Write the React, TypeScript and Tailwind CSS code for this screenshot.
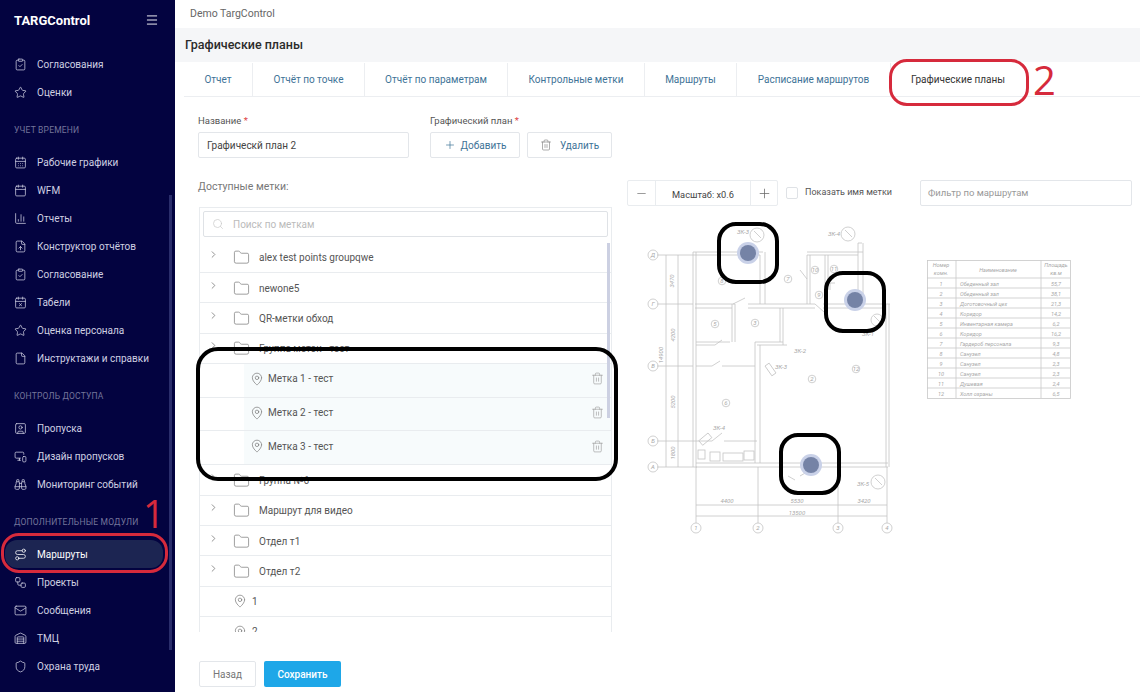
import React from 'react';
import {
  Binoculars, Calendar, CalendarDays, CalendarX, ChartColumn, ChevronRight, ClipboardCheck, File, FileUp,
  Folder, Mail, MapPin, Menu, Minus, MonitorSmartphone, Plus, Route, Search, Shield, SquareUser, Star,
  Trash2, Warehouse, Workflow,
} from 'lucide-react';

const navSections = [
  { title: '', items: [['Согласования', ClipboardCheck], ['Оценки', Star]] },
  {
    title: 'УЧЕТ ВРЕМЕНИ',
    items: [
      ['Рабочие графики', CalendarDays], ['WFM', Calendar], ['Отчеты', ChartColumn], ['Конструктор отчётов', FileUp],
      ['Согласование', ClipboardCheck], ['Табели', CalendarX], ['Оценка персонала', Star], ['Инструктажи и справки', File],
    ],
  },
  { title: 'КОНТРОЛЬ ДОСТУПА', items: [['Пропуска', SquareUser], ['Дизайн пропусков', MonitorSmartphone], ['Мониторинг событий', Binoculars]] },
  { title: 'ДОПОЛНИТЕЛЬНЫЕ МОДУЛИ', items: [['Маршруты', Route], ['Проекты', Workflow], ['Сообщения', Mail], ['ТМЦ', Warehouse], ['Охрана труда', Shield]] },
] as { title: string; items: [string, any][] }[];

const tabs = [
  ['Отчет', 'w-[69px]'], ['Отчёт по точке', 'w-[112px]'], ['Отчёт по параметрам', 'w-[143px]'], ['Контрольные метки', 'w-[137px]'],
  ['Маршруты', 'w-[92px]'], ['Расписание маршрутов', 'w-[154px]'],
];

// plan lines in page coordinates
const planLines = [
  [666, 255, 666, 467], [678, 255, 678, 467], [657, 255, 693, 255], [657, 304, 693, 304], [657, 366, 693, 366], [657, 441, 697, 441], [657, 467, 697, 467],
  [693, 252, 693, 467], [696, 252, 696, 467], [693, 252, 763, 252], [693, 255, 760, 255], [807, 252, 863, 252], [807, 255, 858, 255],
  [760, 255, 760, 304], [765, 252, 765, 304], [807, 255, 807, 304], [810, 255, 810, 304], [825, 255, 825, 290], [828, 255, 828, 290],
  [858, 243, 858, 300], [863, 243, 863, 304], [695, 304, 735, 304], [695, 308, 732, 308], [748, 304, 815, 304], [748, 308, 815, 308], [823, 304, 890, 304], [823, 308, 884, 308],
  [886, 304, 886, 467], [889, 304, 889, 467], [732, 304, 732, 342], [735, 304, 735, 342], [780, 308, 780, 342], [783, 308, 783, 345], [755, 342, 783, 342], [757, 345, 787, 345],
  [755, 342, 755, 463], [760, 345, 760, 463], [696, 342, 730, 342], [696, 345, 715, 345], [696, 366, 712, 366], [722, 366, 755, 366], [697, 441, 712, 441], [724, 441, 757, 441],
  [696, 463, 888, 463], [696, 467, 888, 467], [696, 505, 887, 505], [696, 516, 887, 516], [696, 467, 696, 523], [758, 467, 758, 523], [838, 467, 838, 523], [887, 467, 887, 523],
  [715, 345, 722, 340], [712, 366, 720, 361], [712, 441, 722, 433], [800, 270, 807, 279], [733, 304, 745, 298], [815, 304, 824, 312], [788, 476, 795, 480], [800, 476, 807, 472],
  [825, 283, 835, 283], [830, 283, 830, 290], [858, 243, 862, 243],
];

const axisCircles = [
  [653, 255, 'Д'], [653, 304, 'Г'], [653, 366, 'В'], [653, 441, 'Б'], [653, 467, 'А'], [696, 528, '1'], [758, 528, '2'], [838, 528, '3'], [887, 528, '4'],
] as [number, number, string][];

const roomCircles = [
  [815, 270, '10'], [834, 269, '11'], [722, 281, '8'], [788, 279, '7'], [819, 295, '9'], [715, 324, '5'], [755, 323, '3'], [856, 369, '12'], [812, 379, '2'], [726, 403, '6'],
] as [number, number, string][];

const fixtureCircles = [[757, 235, 7], [848, 234, 7], [877, 320, 6], [878, 482, 7]];

const tableRows = [
  ['1', 'Обеденный зал', '55,7'], ['2', 'Обеденный зал', '38,1'], ['3', 'Доготовочный цех', '21,3'], ['4', 'Коридор', '14,2'], ['5', 'Инвентарная камера', '6,2'], ['6', 'Коридор', '16,2'],
  ['7', 'Гардероб персонала', '9,3'], ['8', 'Санузел', '4,8'], ['9', 'Санузел', '2,3'], ['10', 'Санузел', '2,3'], ['11', 'Душевая', '2,4'], ['12', 'Холл охраны', '6,5'],
];

const Plan = () => (
  <svg className="block w-[505px] h-[335px]" viewBox="627 210 505 335" fill="none">
    <g stroke="#c4c4c4" strokeWidth="0.8">
      {planLines.map((l, i) => <line key={i} x1={l[0]} y1={l[1]} x2={l[2]} y2={l[3]} />)}
      {axisCircles.map((c, i) => <circle key={i} cx={c[0]} cy={c[1]} r="5" />)}
      {roomCircles.map((c, i) => <circle key={i} cx={c[0]} cy={c[1]} r="3.8" />)}
      {fixtureCircles.map((c, i) => (
        <g key={i}>
          <circle cx={c[0]} cy={c[1]} r={c[2]} />
          <line x1={c[0] - 3} y1={c[1] - 4} x2={c[0] + 4} y2={c[1] + 3} />
        </g>
      ))}
      <rect x="698" y="450" width="7" height="9" />
      <rect x="710" y="452" width="10" height="9" />
      <rect x="723" y="453" width="20" height="8" />
      <rect x="744" y="451" width="10" height="9" />
      <rect x="765" y="366" width="5" height="12" transform="rotate(-35 765 366)" />
      <rect x="708" y="433" width="6" height="12" transform="rotate(50 708 433)" />
    </g>
    <g fill="#a8a8a8" fontFamily="Roboto, sans-serif" fontSize="6" fontStyle="italic" textAnchor="middle">
      {[...axisCircles, ...roomCircles].map((c, i) => <text key={i} x={c[0]} y={c[1] + 2}>{c[2]}</text>)}
      <text x="727" y="503">4400</text>
      <text x="797" y="503">5530</text>
      <text x="864" y="503">3420</text>
      <text x="797" y="515">13500</text>
      <text x="743" y="234">ЗК-3</text>
      <text x="834" y="236">ЗК-4</text>
      <text x="868" y="336">ЗК-1</text>
      <text x="800" y="353">ЗК-2</text>
      <text x="781" y="369">ЗК-3</text>
      <text x="863" y="486">ЗК-5</text>
      <text x="719" y="430">ЗК-4</text>
      <text transform="rotate(-90 674 281)" x="674" y="281">3470</text>
      <text transform="rotate(-90 675 335)" x="675" y="335">4200</text>
      <text transform="rotate(-90 663 355)" x="663" y="355">14900</text>
      <text transform="rotate(-90 675 402)" x="675" y="402">5200</text>
      <text transform="rotate(-90 675 453)" x="675" y="453">1800</text>
    </g>
    {/* room schedule */}
    <g stroke="#c8c8c8" strokeWidth="0.8">
      <rect x="927.5" y="260.5" width="143" height="138" />
      <line x1="956" y1="260" x2="956" y2="398" />
      <line x1="1041" y1="260" x2="1041" y2="398" />
      {tableRows.map((_, i) => <line key={i} x1="927" y1={278 + i * 10} x2="1070" y2={278 + i * 10} />)}
    </g>
    <g fill="#a8a8a8" fontFamily="Roboto, sans-serif" fontSize="5.5" fontStyle="italic">
      <text x="941" y="267" textAnchor="middle">Номер</text>
      <text x="941" y="275" textAnchor="middle">комн.</text>
      <text x="998" y="272" textAnchor="middle">Наименование</text>
      <text x="1056" y="267" textAnchor="middle">Площадь</text>
      <text x="1056" y="275" textAnchor="middle">кв.м</text>
      {tableRows.map((r, i) => (
        <React.Fragment key={i}>
          <text x="941" y={285.5 + i * 10} textAnchor="middle">{r[0]}</text>
          <text x="960" y={285.5 + i * 10}>{r[1]}</text>
          <text x="1056" y={285.5 + i * 10} textAnchor="middle">{r[2]}</text>
        </React.Fragment>
      ))}
    </g>
    {/* points */}
    {[[748, 253], [855, 300], [811, 465]].map((p, i) => (
      <g key={i}>
        <circle cx={p[0]} cy={p[1]} r="11" fill="#c9d1e8" />
        <circle cx={p[0]} cy={p[1]} r="8" fill="#7583a6" />
      </g>
    ))}
    {/* annotations */}
    <g stroke="#000" strokeWidth="4">
      <rect x="719" y="224" width="58" height="58" rx="17" />
      <rect x="826" y="273" width="58" height="58" rx="17" />
      <rect x="781" y="435" width="58" height="58" rx="17" />
    </g>
  </svg>
);

const FolderRow = ({ name }: { name: string }) => (
  <div className="h-[30.4px] shrink-0 flex items-center pt-[1px] border-b border-[#e9ecef] text-[10px] text-[#555]">
    <ChevronRight className="w-[11px] h-[11px] ml-[8px] text-[#888] -translate-y-[3px]" />
    <Folder className="w-[17px] h-[17px] ml-[14px] text-[#777]" strokeWidth={1} />
    <span className="ml-[9px]">{name}</span>
  </div>
);

const LeafRow = ({ name }: { name: string }) => (
  <div className="h-[33.7px] shrink-0 flex items-center pl-[44px] border-b border-[#e9ecef]">
    <div className="flex-1 h-full flex items-center pb-[3px] bg-[#f7fbfc] text-[10px] text-[#555] pr-[7px]">
      <MapPin className="w-[14px] h-[14px] ml-[6px] text-[#777]" strokeWidth={1.2} />
      <span className="ml-[4px] flex-1">{name}</span>
      <Trash2 className="w-[13px] h-[13px] text-[#9a9a9a]" strokeWidth={1.2} />
    </div>
  </div>
);

const App: React.FC = () => {
  return (
    <div className="relative flex w-[1140px] h-[692px] overflow-hidden bg-white font-['Roboto',sans-serif]">
      {/* Sidebar */}
      <aside className="relative w-[175px] shrink-0 bg-[#030340] pl-[5px] pr-[12px]">
        <div className="h-[50px] flex justify-between pl-[9px] pr-[4px] pt-[12px] text-white">
          <span className="text-[13px] font-bold leading-[17px]">TARGControl</span>
          <Menu className="w-[14px] h-[14px] mt-[1px]" strokeWidth={1.6} />
        </div>
        {navSections.map(section => (
          <div key={section.title}>
            {section.title && (
              <div className="h-[42px] pt-[17px] pl-[9px] text-[8.5px] leading-[14px] text-[#74759b] tracking-[0.2px]">{section.title}</div>
            )}
            {section.items.map(([label, Icon]) => (
              <div key={label} className={`h-[28px] flex items-center rounded-[12px] pl-[9px] text-[10px] ${label === 'Маршруты' ? 'bg-[#1c2552] text-white' : 'text-[#cfd0e2]'}`}>
                <Icon className="w-[13px] h-[13px] shrink-0" strokeWidth={1.4} />
                <span className="ml-[10px]">{label}</span>
              </div>
            ))}
          </div>
        ))}
        <div className="absolute left-[169px] top-[195px] w-[3px] h-[455px] bg-[#2a2d6b]" />
      </aside>

      {/* Main */}
      <main className="flex-1 min-w-0 flex flex-col">
        <div className="h-[28px] pl-[15px] flex items-center text-[10.5px] text-[#666]">Demo TargControl</div>
        <div className="h-[34px] pl-[10px] flex items-center bg-[#f5f6f8] text-[12.5px] font-medium text-[#2b2b2b]">Графические планы</div>
        <div className="h-[35px] ml-[9px] pt-[1px] flex border-b border-[#eceef1] text-[10px] text-[#3e7397]">
          {tabs.map(([label, width]) => (
            <div key={label} className={`${width} flex items-center justify-center border-r border-[#eceef1]`}>{label}</div>
          ))}
          <div className="w-[134px] flex items-center justify-center text-[#333]">Графические планы</div>
        </div>

        <div className="flex pl-[23px] pt-[16px]">
          {/* Left column */}
          <div className="w-[414px] shrink-0">
            <div className="flex pt-[1px]">
              <div className="w-[232px]">
                <div className="text-[9.5px] leading-[14px] text-[#555]">Название <span className="text-[#d44]">*</span></div>
                <div className="mt-[4px] w-[211px] h-[26px] flex items-center pl-[8px] border border-[#e3e6ea] rounded-[2px] text-[10px] text-[#444]">Графическй план 2</div>
              </div>
              <div>
                <div className="text-[9.5px] leading-[14px] text-[#555]">Графический план <span className="text-[#d44]">*</span></div>
                <div className="mt-[4px] flex gap-[7px] text-[10px] text-[#3e7397]">
                  <div className="w-[90px] h-[26px] flex items-center justify-center gap-[5px] border border-[#e3e6ea] rounded-[2px]">
                    <Plus className="w-[12px] h-[12px]" strokeWidth={1.4} />Добавить
                  </div>
                  <div className="w-[85px] h-[26px] flex items-center justify-center gap-[8px] border border-[#e3e6ea] rounded-[2px]">
                    <Trash2 className="w-[12px] h-[12px] text-[#777]" strokeWidth={1.2} />Удалить
                  </div>
                </div>
              </div>
            </div>
            <div className="mt-[21px] text-[10.5px] leading-[16px] text-[#777]">Доступные метки:</div>
            <div className="relative mt-[12px] ml-[1px] w-[413px] h-[425px] flex flex-col overflow-hidden border border-b-0 border-[#e9ecef]">
              <div className="shrink-0 h-[34.5px] px-[3px] pt-[3px]">
                <div className="h-[26px] flex items-center pl-[8px] border border-[#dfe2e6] rounded-[2px] text-[10px] text-[#bbb]">
                  <Search className="w-[12px] h-[12px] text-[#ccc]" strokeWidth={1.5} />
                  <span className="ml-[9px]">Поиск по меткам</span>
                </div>
              </div>
              <FolderRow name="alex test points groupqwe" />
              <FolderRow name="newone5" />
              <FolderRow name="QR-метки обход" />
              <FolderRow name="Группа меток - тест" />
              <LeafRow name="Метка 1 - тест" />
              <LeafRow name="Метка 2 - тест" />
              <LeafRow name="Метка 3 - тест" />
              <FolderRow name="Группа №6" />
              <FolderRow name="Маршрут для видео" />
              <FolderRow name="Отдел т1" />
              <FolderRow name="Отдел т2" />
              {['1', '2'].map(n => (
                <div key={n} className="h-[30.4px] shrink-0 flex items-center border-b border-[#e9ecef] pl-[33px] text-[10px] text-[#555]">
                  <MapPin className="w-[14px] h-[14px] text-[#777]" strokeWidth={1.2} />
                  <span className="ml-[5px]">{n}</span>
                </div>
              ))}
              <div className="absolute right-[1px] top-[35px] w-[3px] h-[175px] bg-[#ccd0e2]" />
            </div>
            <div className="mt-[29px] ml-[1px] flex gap-[8px] text-[10px]">
              <div className="w-[57px] h-[26px] flex items-center justify-center border border-[#e3e6ea] rounded-[2px] text-[#777]">Назад</div>
              <div className="w-[77px] h-[26px] flex items-center justify-center bg-[#1ea7e8] rounded-[2px] text-white font-medium">Сохранить</div>
            </div>
          </div>

          {/* Plan column */}
          <div className="ml-[15px] pt-[67px] w-[505px]">
            <div className="flex h-[26px] items-center">
              <div className="w-[151px] h-[26px] flex items-center border border-[#e9ecef] rounded-[2px] text-[9.25px] text-[#444]">
                <div className="w-[28px] h-full flex items-center justify-center border-r border-[#e9ecef]"><Minus className="w-[13px] h-[13px] text-[#666]" strokeWidth={1.2} /></div>
                <div className="flex-1 text-center pt-[4px]">Масштаб: x0.6</div>
                <div className="w-[27px] h-full flex items-center justify-center border-l border-[#e9ecef]"><Plus className="w-[15px] h-[15px] text-[#666]" strokeWidth={1.2} /></div>
              </div>
              <div className="ml-[8px] w-[12px] h-[12px] border border-[#dfe2e6] rounded-[2px]" />
              <div className="ml-[7px] w-[115px] text-[9px] leading-[14px] -mt-[2px] text-[#555]">Показать имя метки</div>
              <div className="w-[212px] h-[26px] flex items-center pl-[7px] pt-[1px] border border-[#e3e6ea] rounded-[2px] text-[9.5px] text-[#999]">Фильтр по маршрутам</div>
            </div>
            <div className="mt-[4px]"><Plan /></div>
          </div>
        </div>
      </main>

      {/* Annotations */}
      <div className="absolute left-[1px] top-[533px] w-[167px] h-[40px] border-[3px] border-[#d62a3c] rounded-[18px]" />
      <div className="absolute left-[889px] top-[59px] w-[140px] h-[47px] border-[3px] border-[#d62a3c] rounded-[18px]" />
      <div className="absolute left-[196px] top-[347px] w-[422px] h-[134px] border-[4px] border-black rounded-[22px]" />
      <span className="absolute left-[143px] top-[494px] text-[38px] leading-[38px] text-[#d62a3c] font-['Open_Sans',sans-serif]">1</span>
      <span className="absolute left-[1033px] top-[59px] text-[40px] leading-[42px] text-[#d62a3c] font-['Open_Sans',sans-serif]">2</span>
    </div>
  );
};

export default App;
